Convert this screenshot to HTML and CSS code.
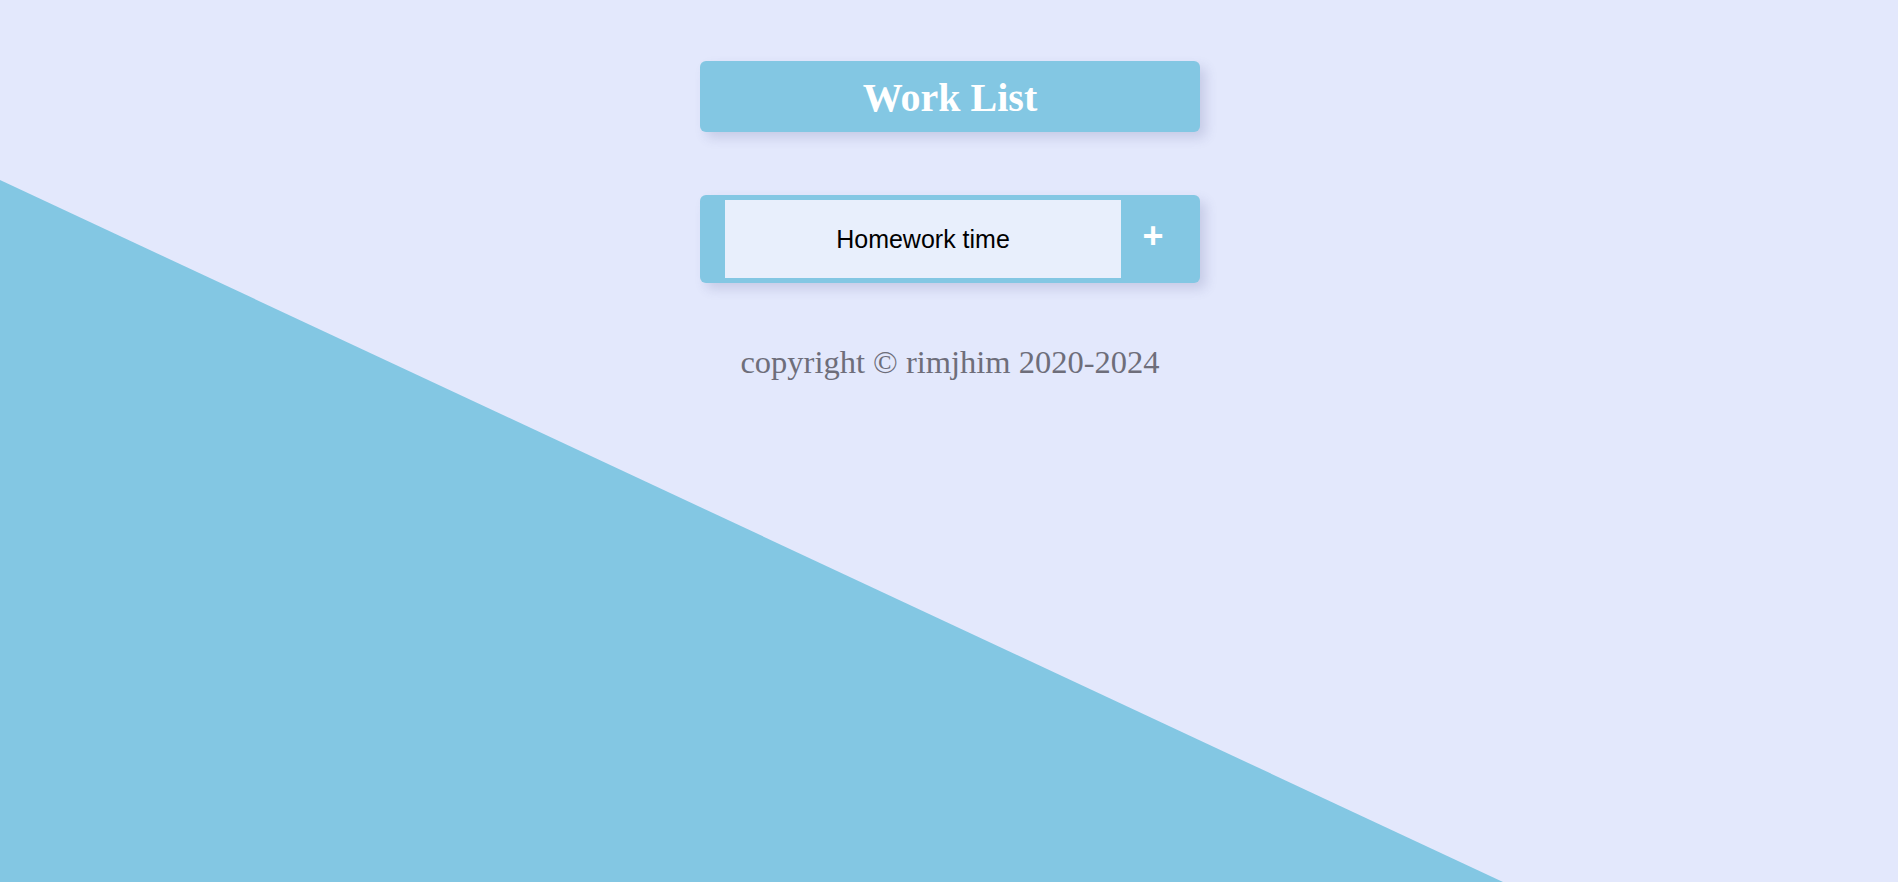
FILE: index.html
```html
<!DOCTYPE html>
<html lang="en">
<head>
<meta charset="utf-8">
<title>Work List</title>
<link rel="stylesheet" href="styles.css">
</head>
<body>
<div class="backdrop"></div>
<main class="app">
  <header class="title-box">
    <h1 class="title">Work List</h1>
  </header>
  <form class="entry">
    <input class="entry-input" type="text" value="Homework time">
    <button class="entry-add" type="button">+</button>
  </form>
  <p class="copyright">copyright © rimjhim 2020-2024</p>
</main>
</body>
</html>
```
FILE: styles.css
```css
html, body {
  margin: 0;
  padding: 0;
  height: 100%;
}
body {
  background: #e3e8fc;
  font-family: "Liberation Serif", "Times New Roman", serif;
  overflow: hidden;
  position: relative;
  padding-left: 2px;
  box-sizing: border-box;
}
.backdrop {
  position: absolute;
  inset: 0;
  background: #83c7e3;
  clip-path: polygon(0 180px, 1503px 100%, 0 100%);
  z-index: 0;
}
.app {
  position: relative;
  z-index: 1;
  width: 500px;
  margin: 0 auto;
  padding-top: 61px;
  display: flex;
  flex-direction: column;
  align-items: stretch;
}
.title-box {
  height: 71px;
  background: #83c7e3;
  border-radius: 6px;
  box-shadow: 6px 6px 12px rgba(70, 80, 140, 0.18);
  display: flex;
  align-items: center;
  justify-content: center;
}
.title {
  margin: 0;
  color: #ffffff;
  font-family: "Liberation Serif", "Times New Roman", serif;
  font-weight: bold;
  font-size: 40px;
  line-height: 1;
  padding-top: 2px;
}
.entry {
  margin: 63px 0 0 0;
  background: #83c7e3;
  border-radius: 6px;
  box-shadow: 6px 6px 12px rgba(70, 80, 140, 0.18);
  padding: 5px 17px 5px 25px;
  display: flex;
  align-items: stretch;
}
.entry-input {
  flex: 1;
  min-width: 0;
  height: 78px;
  box-sizing: border-box;
  border: none;
  outline: none;
  background: #e8effc;
  font-family: "Liberation Sans", Arial, sans-serif;
  font-size: 25px;
  color: #000;
  text-align: center;
  padding: 0;
  margin: 0;
}
.entry-add {
  width: 62px;
  border: none;
  background: transparent;
  color: #ffffff;
  font-family: "Liberation Sans", Arial, sans-serif;
  font-weight: bold;
  font-size: 36px;
  line-height: 1;
  padding: 0 0 7px 2px;
  margin: 0;
  cursor: pointer;
}
.copyright {
  margin: 61px 0 0 0;
  text-align: center;
  font-family: "Liberation Serif", "Times New Roman", serif;
  font-size: 32.5px;
  color: #6e6e7a;
}
```
